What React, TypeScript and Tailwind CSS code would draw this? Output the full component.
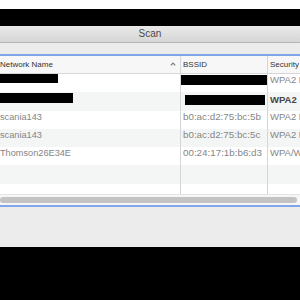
import React from "react";

const rows = [
  { h: "h-[18px]", bg: "bg-white", name: { bar: "w-[58px] h-[9px] mt-[0px]" }, bssid: { bar: "w-[86px] h-[10px] mt-[1px] -ml-[2px]" }, sec: "WPA2 Personal", bold: false },
  { h: "h-[19px]", bg: "bg-[#f4f5f5]", name: { bar: "w-[73px] h-[10px] mt-[1px]" }, bssid: { bar: "w-[80px] h-[10px] mt-[3px] ml-[2px]" }, sec: "WPA2", bold: true },
  { h: "h-[18px]", bg: "bg-white", name: "scania143", bssid: "b0:ac:d2:75:bc:5b", sec: "WPA2 Personal", bold: false },
  { h: "h-[18px]", bg: "bg-[#f4f5f5]", name: "scania143", bssid: "b0:ac:d2:75:bc:5c", sec: "WPA2 Personal", bold: false },
  { h: "h-[18px]", bg: "bg-white", name: "Thomson26E34E", bssid: "00:24:17:1b:b6:d3", sec: "WPA/WPA2", bold: false },
  { h: "h-[19px]", bg: "bg-[#f4f5f5]", name: "", bssid: "", sec: "", bold: false },
  { h: "h-[10px]", bg: "bg-white", name: "", bssid: "", sec: "", bold: false },
];

type Cell = string | { bar: string };

function CellBody({ v, cls }: { v: Cell; cls: string }) {
  if (typeof v === "string") {
    return <span className={`block whitespace-nowrap leading-[12px] ${cls}`}>{v}</span>;
  }
  return <div className={`bg-black ${v.bar}`} />;
}

export default function App() {
  return (
    <div className="w-[300px] h-[300px] bg-black flex flex-col overflow-hidden font-['Liberation_Sans',Arial,sans-serif]">
      <div className="h-[9px] bg-white" />
      <div className="h-[17px] bg-black" />
      <div className="h-[17px] bg-gradient-to-b from-[#e9e9e9] to-[#d6d6d6] border-b border-[#b4b4b4] flex items-center justify-center">
        <span className="text-[10px] text-[#4a4a4a] leading-none">Scan</span>
      </div>
      <div className="h-[11px] bg-[#ececec]" />
      <div className="h-[2px] bg-[#7ea6e8]" />
      <div className="h-[18px] bg-[#f7f7f7] border-b border-[#d7d7d7] flex text-[8px] text-[#333]">
        <div className="w-[181px] border-r border-[#d6d6d6] flex items-center justify-between pr-[4px]">
          <span className="whitespace-nowrap">Network Name</span>
          <svg width="6" height="4" viewBox="0 0 6 4" className="mb-[1px]">
            <path d="M0.8 3.3 L3 1 L5.2 3.3" fill="none" stroke="#777" strokeWidth="1.1" />
          </svg>
        </div>
        <div className="w-[87px] border-r border-[#d6d6d6] flex items-center pl-[2px]">BSSID</div>
        <div className="flex-1 flex items-center pl-[2px] whitespace-nowrap">Security</div>
      </div>
      {rows.map((r, i) => (
        <div key={i} className={`${r.h} ${r.bg} flex text-[#858585] overflow-hidden`}>
          <div className="w-[181px] border-r border-[#d6d6d6] pt-[0px] overflow-hidden">
            <CellBody v={r.name} cls="text-[9.2px]" />
          </div>
          <div className="w-[87px] border-r border-[#d6d6d6] pl-[2px] overflow-visible relative">
            <CellBody v={r.bssid} cls="text-[9.8px]" />
          </div>
          <div className="flex-1 pl-[2px] overflow-hidden">
            <span className={`block whitespace-nowrap leading-[12px] text-[9.5px] ${r.bold ? "font-bold text-[#454545] mt-[2px]" : ""}`}>
              {r.sec}
            </span>
          </div>
        </div>
      ))}
      <div className="h-[11px] bg-[#f6f6f6] border-t border-[#e4e4e4] flex items-center pr-[3px]">
        <div className="h-[6px] w-full rounded-full bg-[#c3c3c3]" />
      </div>
      <div className="h-[2px] bg-[#7ea6e8]" />
      <div className="h-[40px] bg-[#ececec]" />
      <div className="flex-1 bg-black" />
    </div>
  );
}
